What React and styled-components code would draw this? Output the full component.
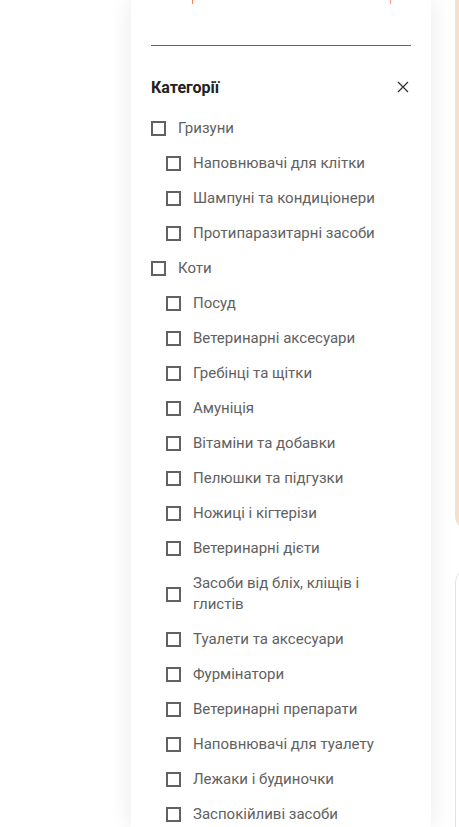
import React, { useState } from "react";
import styled, { createGlobalStyle } from "styled-components";

const GlobalStyle = createGlobalStyle`
  html, body {
    margin: 0;
    padding: 0;
    height: 827px;
    overflow: hidden;
    background: #ffffff;
    font-family: Roboto, "Noto Sans", Arial, sans-serif;
  }
`;

const Page = styled.div`
  display: flex;
  height: 827px;
  padding-left: 131px;
  overflow: hidden;
`;

const Panel = styled.aside`
  box-sizing: border-box;
  width: 300px;
  flex-shrink: 0;
  height: 827px;
  padding: 0 20px;
  background: #fff;
  box-shadow: 0 0 22px rgba(0, 0, 0, 0.09);
  position: relative;
  z-index: 1;
  overflow: hidden;
`;

const Aside = styled.div`
  display: flex;
  flex-direction: column;
  flex-shrink: 0;
  gap: 38px;
  margin-left: 24px;
`;

const PromoCard = styled.div`
  flex-shrink: 0;
  width: 300px;
  height: 550px;
  margin-top: -20px;
  background: #f6dfcc;
  border-radius: 14px;
`;

const WhiteCard = styled.div`
  flex-shrink: 0;
  width: 300px;
  height: 400px;
  border: 1px solid #e2e2e2;
  border-radius: 14px;
`;

const CutStub = styled.div`
  box-sizing: border-box;
  height: 4px;
  width: 199px;
  margin-left: 41px;
  border-left: 1px solid #ff7f50;
  border-right: 1px solid #ff9a85;
`;

const Divider = styled.hr`
  margin: 41px 0 0;
  border: 0;
  border-top: 1px solid #666;
`;

const Header = styled.div`
  display: flex;
  align-items: center;
  justify-content: space-between;
  height: 40px;
  margin: 21px 0 4px;
`;

const Title = styled.h3`
  margin: 0;
  font-size: 16px;
  font-weight: 700;
  color: #212121;
`;

const CloseButton = styled.button`
  display: flex;
  align-items: center;
  justify-content: center;
  width: 20px;
  height: 20px;
  padding: 0;
  margin-right: -2px;
  border: 0;
  background: none;
  cursor: pointer;
`;

const List = styled.ul`
  list-style: none;
  margin: 0;
  padding: 0;
`;

const Item = styled.li`
  display: flex;
  align-items: center;
  gap: 12px;
  padding: 7px 0 7px ${(p) => (p.$sub ? 15 : 0)}px;
  font-size: 15px;
  line-height: 21px;
  color: #616161;
  cursor: pointer;
`;

const Box = styled.span`
  box-sizing: border-box;
  flex-shrink: 0;
  width: 15px;
  height: 15px;
  border: 2px solid #616161;
  background: ${(p) => (p.$checked ? "#616161" : "transparent")};
`;

const categories = [
  { name: "Гризуни" },
  { name: "Наповнювачі для клітки", sub: true },
  { name: "Шампуні та кондиціонери", sub: true },
  { name: "Протипаразитарні засоби", sub: true },
  { name: "Коти" },
  { name: "Посуд", sub: true },
  { name: "Ветеринарні аксесуари", sub: true },
  { name: "Гребінці та щітки", sub: true },
  { name: "Амуніція", sub: true },
  { name: "Вітаміни та добавки", sub: true },
  { name: "Пелюшки та підгузки", sub: true },
  { name: "Ножиці і кігтерізи", sub: true },
  { name: "Ветеринарні дієти", sub: true },
  { name: "Засоби від бліх, кліщів і глистів", sub: true },
  { name: "Туалети та аксесуари", sub: true },
  { name: "Фурмінатори", sub: true },
  { name: "Ветеринарні препарати", sub: true },
  { name: "Наповнювачі для туалету", sub: true },
  { name: "Лежаки і будиночки", sub: true },
  { name: "Заспокійливі засоби", sub: true },
];

const App = () => {
  const [checked, setChecked] = useState({});
  const toggle = (name) => setChecked((c) => ({ ...c, [name]: !c[name] }));

  return (
    <>
      <GlobalStyle />
      <Page>
        <Panel>
          <CutStub />
          <Divider />
          <Header>
            <Title>Категорії</Title>
            <CloseButton aria-label="Закрити">
              <svg width="12" height="12" viewBox="0 0 12 12">
                <path d="M1 1L11 11M11 1L1 11" stroke="#333" strokeWidth="1.3" />
              </svg>
            </CloseButton>
          </Header>
          <List>
            {categories.map((c) => (
              <Item key={c.name} $sub={c.sub} onClick={() => toggle(c.name)}>
                <Box $checked={checked[c.name]} />
                {c.name}
              </Item>
            ))}
          </List>
        </Panel>
        <Aside>
          <PromoCard />
          <WhiteCard />
        </Aside>
      </Page>
    </>
  );
};

export default App;
